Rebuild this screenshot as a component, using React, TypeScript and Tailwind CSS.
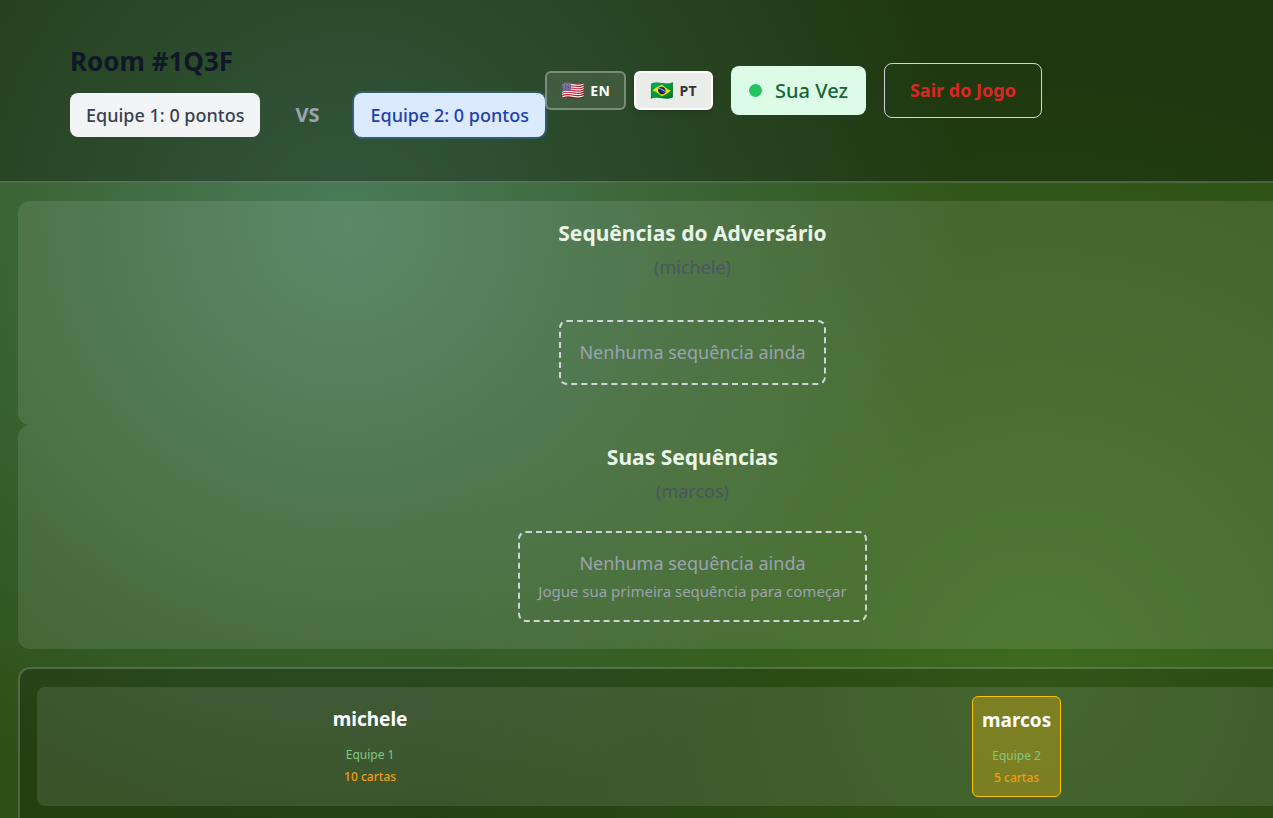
import { useState } from "react";

type Language = "EN" | "PT";

const languages: { code: Language; flag: string; name: string }[] = [
  { code: "EN", flag: "🇺🇸", name: "English" },
  { code: "PT", flag: "🇧🇷", name: "Português" },
];

const players = [
  { name: "michele", team: "Equipe 1", cards: "10 cartas", active: false },
  { name: "marcos", team: "Equipe 2", cards: "5 cartas", active: true },
];

function LanguageSwitch() {
  const [current, setCurrent] = useState<Language>("PT");
  return (
    <div className="flex items-center gap-2">
      {languages.map(({ code, flag, name }) => (
        <button
          key={code}
          type="button"
          title={name}
          aria-pressed={current === code}
          onClick={() => setCurrent(code)}
          className={
            "flex items-center gap-[5px] rounded-md border-2 px-3.5 py-1.5 text-sm leading-[23px] font-bold tracking-wide " +
            (current === code
              ? "border-white bg-white/90 text-[#333333] shadow-md"
              : "border-white/30 bg-white/10 text-white")
          }
        >
          <span className="text-[19px]">{flag}</span>
          <span>{code}</span>
        </button>
      ))}
    </div>
  );
}

function Header() {
  return (
    <header className="flex items-center border-b-2 border-white/20 bg-black/30 px-[70px] py-11">
      <div>
        <h1 className="mb-3.5 text-[26px] leading-[35px] font-bold text-gray-900">Room #1Q3F</h1>
        <div className="flex items-center gap-[35px]">
          <div className="rounded-lg bg-[#f3f4f6] px-4 py-2 text-lg leading-7 font-medium text-[#374151]">
            Equipe 1: 0 pontos
          </div>
          <span className="text-xl leading-7 font-bold text-[#9ca3af]">VS</span>
          <div className="rounded-lg bg-[#dbeafe] px-4 py-2 text-lg leading-7 font-medium text-[#1e40af] ring-2 ring-[#3b82f6]/30">
            Equipe 2: 0 pontos
          </div>
        </div>
      </div>
      <div className="flex items-center gap-[18px]">
        <LanguageSwitch />
        <div className="flex items-center gap-[13px] rounded-lg bg-[#dcfce7] px-[18px] py-2.5 text-xl leading-[29px] font-medium text-[#166534]">
          <span className="size-[13px] rounded-full bg-[#22c55e]" />
          Sua Vez
        </div>
        <button
          type="button"
          className="rounded-lg border border-[#d1d5db] px-[25px] py-[13px] text-lg leading-[27px] font-bold text-[#dc2626]"
        >
          Sair do Jogo
        </button>
      </div>
    </header>
  );
}

function SequencePanel({ title, player, hint }: { title: string; player: string; hint?: string }) {
  return (
    <section className="flex flex-col rounded-xl bg-white/10 p-[18px] text-center">
      <h2 className="text-[21px] leading-7 font-bold text-[#e8f5e8]">{title}</h2>
      <p className="mt-[7px] mb-[17px] text-lg leading-[27px] text-[#4b5563]">({player})</p>
      <div className="flex min-h-[109px] items-center justify-center">
        <div className="rounded-lg border-2 border-dashed border-[#d1d5db] px-[18px] py-[17px] text-[#9ca3af]">
          <p className="text-lg leading-[27px]">Nenhuma sequência ainda</p>
          {hint && <p className="mt-0.5 text-[15px] leading-6">{hint}</p>}
        </div>
      </div>
    </section>
  );
}

function PlayerBar() {
  return (
    <div className="flex items-start justify-around rounded-lg bg-white/10 p-[9px]">
      {players.map((player) => (
        <div
          key={player.name}
          className={
            "rounded-md p-[9px] text-center " +
            (player.active ? "border border-[#ffc107] bg-[#ffc107]/30" : "")
          }
        >
          <h3 className="text-[19px] leading-7 font-bold text-white">{player.name}</h3>
          <p className="mt-[13px] text-xs leading-[18px] text-[#81c784]">{player.team}</p>
          <p className="mt-1 text-xs leading-[18px] font-medium text-[#f39c12]">{player.cards}</p>
        </div>
      ))}
    </div>
  );
}

export default function App() {
  return (
    <div className="h-screen overflow-auto bg-[#2d5016] font-['Noto_Sans',sans-serif] [scrollbar-width:none]">
      <div className="flex min-h-[900px] w-full min-w-[1385px] flex-col bg-[radial-gradient(circle_at_25%_25%,#4a7c59_0%,transparent_50%),radial-gradient(circle_at_75%_75%,#3d6b1f_0%,transparent_50%)]">
        <Header />
        <main className="flex flex-1 flex-col px-[18px] pt-[18px]">
          <SequencePanel title="Sequências do Adversário" player="michele" />
          <SequencePanel
            title="Suas Sequências"
            player="marcos"
            hint="Jogue sua primeira sequência para começar"
          />
          <section className="mt-[18px] flex-1 rounded-t-xl border-2 border-b-0 border-white/20 bg-black/20 px-[17px] py-[18px]">
            <PlayerBar />
          </section>
        </main>
      </div>
    </div>
  );
}
